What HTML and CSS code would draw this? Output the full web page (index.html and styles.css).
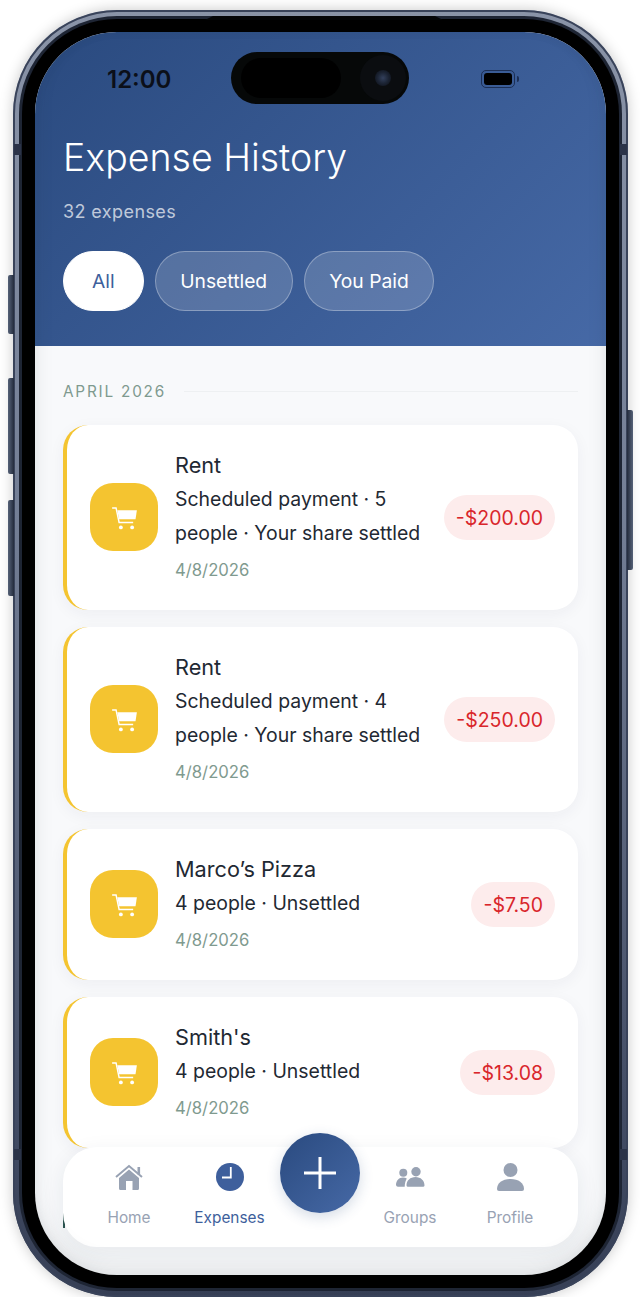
FILE: index.html
```html
<!DOCTYPE html>
<html lang="en">
<head>
    <meta charset="UTF-8">
    <meta name="viewport" content="width=device-width, initial-scale=1.0">
    <title>Expense History</title>
    <link rel="stylesheet" href="styles.css">
</head>
<body>
<div class="phone">
    <span class="side-btn btn-action"></span>
    <span class="side-btn btn-up"></span>
    <span class="side-btn btn-down"></span>
    <span class="side-btn btn-power"></span>
    <span class="band band-tl"></span>
    <span class="band band-tr"></span>
    <span class="band band-bl"></span>
    <span class="band band-br"></span>
    <div class="bezel">
        <div class="screen">
            <div class="island">
                <span class="camera"><span class="lens"></span></span>
            </div>

            <header class="header">
                <div class="status">
                    <span class="time">12:00</span>
                    <span class="battery"><span class="battery-cell"></span></span>
                </div>
                <h1>Expense History</h1>
                <p class="count">32 expenses</p>
                <div class="chips">
                    <button class="chip chip-on">All</button>
                    <button class="chip">Unsettled</button>
                    <button class="chip">You Paid</button>
                </div>
            </header>

            <main class="list">
                <div class="month">
                    <span>APRIL 2026</span>
                    <span class="month-line"></span>
                </div>

                <div class="card">
                    <div class="cat">
                        <svg class="cart" viewBox="0 0 24 24"><path d="M1 3.500h3.500l2.700 12.900h12.500" fill="none" stroke="#fff" stroke-width="1.300"/><path d="M5.600 5.500H23l-1.200 8H7.300z" fill="#fff"/><circle cx="8.800" cy="20.800" r="1.700" fill="#fff"/><circle cx="18.800" cy="20.800" r="1.700" fill="#fff"/></svg>
                    </div>
                    <div class="info">
                        <div class="name">Rent</div>
                        <div class="meta">Scheduled payment · 5 people · Your share settled</div>
                        <div class="date">4/8/2026</div>
                    </div>
                    <div class="amount">-$200.00</div>
                </div>

                <div class="card">
                    <div class="cat">
                        <svg class="cart" viewBox="0 0 24 24"><path d="M1 3.500h3.500l2.700 12.900h12.500" fill="none" stroke="#fff" stroke-width="1.300"/><path d="M5.600 5.500H23l-1.200 8H7.300z" fill="#fff"/><circle cx="8.800" cy="20.800" r="1.700" fill="#fff"/><circle cx="18.800" cy="20.800" r="1.700" fill="#fff"/></svg>
                    </div>
                    <div class="info">
                        <div class="name">Rent</div>
                        <div class="meta">Scheduled payment · 4 people · Your share settled</div>
                        <div class="date">4/8/2026</div>
                    </div>
                    <div class="amount">-$250.00</div>
                </div>

                <div class="card">
                    <div class="cat">
                        <svg class="cart" viewBox="0 0 24 24"><path d="M1 3.500h3.500l2.700 12.900h12.500" fill="none" stroke="#fff" stroke-width="1.300"/><path d="M5.600 5.500H23l-1.200 8H7.300z" fill="#fff"/><circle cx="8.800" cy="20.800" r="1.700" fill="#fff"/><circle cx="18.800" cy="20.800" r="1.700" fill="#fff"/></svg>
                    </div>
                    <div class="info">
                        <div class="name">Marco’s Pizza</div>
                        <div class="meta">4 people · Unsettled</div>
                        <div class="date">4/8/2026</div>
                    </div>
                    <div class="amount">-$7.50</div>
                </div>

                <div class="card">
                    <div class="cat">
                        <svg class="cart" viewBox="0 0 24 24"><path d="M1 3.500h3.500l2.700 12.900h12.500" fill="none" stroke="#fff" stroke-width="1.300"/><path d="M5.600 5.500H23l-1.200 8H7.300z" fill="#fff"/><circle cx="8.800" cy="20.800" r="1.700" fill="#fff"/><circle cx="18.800" cy="20.800" r="1.700" fill="#fff"/></svg>
                    </div>
                    <div class="info">
                        <div class="name">Smith's</div>
                        <div class="meta">4 people · Unsettled</div>
                        <div class="date">4/8/2026</div>
                    </div>
                    <div class="amount">-$13.08</div>
                </div>

                <div class="card card-next"></div>
            </main>

            <nav class="nav">
                <a class="tab">
                    <svg class="tab-icon" viewBox="0 0 28 28"><path d="M1 14 14 3l13 11" fill="none" stroke="#98a2b3" stroke-width="2"/><path d="M22.500 4h2.600v7.500h-2.600z" fill="#98a2b3"/><path fill-rule="evenodd" d="M4 15 14 6.500 24 15v10.500a1.500 1.500 0 0 1-1.500 1.500h-17A1.500 1.500 0 0 1 4 25.500zM11 18v9h6.500v-9z" fill="#98a2b3"/></svg>
                    <span>Home</span>
                </a>
                <a class="tab tab-on">
                    <svg class="tab-icon" viewBox="0 0 28 28"><circle cx="14" cy="14" r="14" fill="#3e5f9c"/><path d="M14.800 4v10.500H6" fill="none" stroke="#fff" stroke-width="1.800"/></svg>
                    <span>Expenses</span>
                </a>
                <button class="fab">
                    <svg viewBox="0 0 32 32"><path d="M16 0v32M0 16h32" fill="none" stroke="#fff" stroke-width="3"/></svg>
                </button>
                <a class="tab">
                    <svg class="tab-icon icon-wide" viewBox="0 0 30 28"><circle cx="8.300" cy="9.700" r="4" fill="#98a2b3"/><circle cx="21" cy="8.700" r="4.700" fill="#98a2b3"/><path d="M1 22c0-4 2.800-7.500 7-7.500 1.500 0 2.700.4 3.800 1.100-1.200 2-2 4.800-2.100 8.100H3a2 2 0 0 1-2-1.700z" fill="#98a2b3"/><path d="M11.500 22.500c0-5 3.800-8.500 9-8.500s9 3.500 9 8.500a1.400 1.400 0 0 1-1.400 1.200H12.900a1.400 1.400 0 0 1-1.400-1.200z" fill="#98a2b3"/></svg>
                    <span>Groups</span>
                </a>
                <a class="tab">
                    <svg class="tab-icon" viewBox="0 0 28 28"><circle cx="14.500" cy="7" r="7" fill="#98a2b3"/><path d="M1 26c0-6 5.500-10 13.500-10S28 20 28 26a2 2 0 0 1-2 2H3a2 2 0 0 1-2-2z" fill="#98a2b3"/></svg>
                    <span>Profile</span>
                </a>
            </nav>

            <div class="edge-shade"></div>
        </div>
    </div>
</div>
</body>
</html>
```
FILE: styles.css
```css
* {
    box-sizing: border-box;
}

body {
    margin: 0;
    background: #fff;
    font-family: Inter, "Liberation Sans", sans-serif;
    overflow: hidden;
}

/* device frame */
.phone {
    position: relative;
    width: 615px;
    height: 1287px;
    margin: 10px 0 0 13px;
    padding: 9px;
    border-radius: 104px;
    background: linear-gradient(180deg, #8a94a8 0%, #737e95 40%, #434d65 85%, #363f55 100%);
    box-shadow: 0 0 14px rgba(0, 0, 0, 0.22), inset 0 0 0 2px #39435a;
}

.phone::after {
    content: "";
    position: absolute;
    left: 192px;
    top: 6px;
    width: 238px;
    height: 4px;
    background: #050608;
    clip-path: polygon(8px 0, 230px 0, 100% 100%, 0 100%);
}

.bezel {
    height: 100%;
    padding: 13px;
    border-radius: 95px;
    background: #000;
    box-shadow: 0 0 0 3px #1e2534;
}

.screen {
    position: relative;
    display: flex;
    flex-direction: column;
    height: 1243px;
    border-radius: 82px;
    background: #f8f9fb;
    overflow: hidden;
}

.side-btn {
    position: absolute;
    width: 6px;
    background: linear-gradient(90deg, #566278, #232b3c);
    border-radius: 2px 0 0 2px;
}

.btn-action { left: -5px; top: 265px; height: 59px; }
.btn-up { left: -5px; top: 368px; height: 96px; }
.btn-down { left: -5px; top: 490px; height: 96px; }

.btn-power {
    right: -5px;
    top: 400px;
    height: 160px;
    background: linear-gradient(270deg, #566278, #232b3c);
    border-radius: 0 2px 2px 0;
}

.band {
    position: absolute;
    width: 7px;
    height: 11px;
    background: #2b3348;
}

.band-tl { left: 1px; top: 134px; }
.band-tr { right: 1px; top: 134px; }
.band-bl { left: 1px; top: 1139px; }
.band-br { right: 1px; top: 1139px; }

.island {
    position: absolute;
    left: 196px;
    top: 20px;
    width: 178px;
    height: 52px;
    border-radius: 26px;
    background: #060808;
}

.island::before {
    content: "";
    position: absolute;
    left: 10px;
    top: 6px;
    width: 100px;
    height: 40px;
    border-radius: 20px;
    background: #000;
}

.camera {
    position: absolute;
    right: 3px;
    top: 3px;
    width: 46px;
    height: 46px;
    border-radius: 50%;
    background: #0b0d10;
}

.lens {
    position: absolute;
    left: 15px;
    top: 15px;
    width: 16px;
    height: 16px;
    border-radius: 50%;
    background: radial-gradient(circle, #33405c 0%, #1b2333 50%, #0a0c12 100%);
}

/* header */
.header {
    padding: 28px 28px 35px;
    background: linear-gradient(135deg, #2a4a7f 0%, #4669a6 100%);
    color: #fff;
}

.status {
    display: flex;
    justify-content: space-between;
    align-items: center;
    height: 38px;
    padding: 0 63px 0 44px;
}

.time {
    font-size: 24px;
    font-weight: 600;
    color: #0b0f19;
}

.battery {
    position: relative;
    width: 34px;
    height: 18px;
    padding: 2px;
    border: 1px solid #1c2f55;
    border-radius: 5px;
}

.battery::after {
    content: "";
    position: absolute;
    right: -5px;
    top: 5px;
    width: 2px;
    height: 6px;
    border-radius: 0 2px 2px 0;
    background: #1c2f55;
}

.battery-cell {
    display: block;
    height: 100%;
    border-radius: 3px;
    background: #000;
}

h1 {
    margin: 36px 0 0;
    font-size: 37.500px;
    font-weight: 300;
    line-height: 48px;
}

.count {
    margin: 18px 0 0;
    font-size: 18px;
    line-height: 24px;
    letter-spacing: 0.4px;
    color: rgba(255, 255, 255, 0.7);
}

.chips {
    display: flex;
    gap: 11px;
    margin-top: 27px;
}

.chip {
    height: 60px;
    padding: 0 24.500px;
    border: 1px solid rgba(255, 255, 255, 0.3);
    border-radius: 30px;
    background: rgba(255, 255, 255, 0.16);
    color: #fff;
    font-family: inherit;
    font-size: 19.300px;
}

.chip-on {
    padding: 0 28px;
    border-color: #fff;
    background: #fff;
    color: #3e5f9c;
}

/* expense list */
.list {
    height: 882px;
    padding: 0 28px;
    overflow: hidden;
}

.month {
    display: flex;
    align-items: center;
    gap: 18px;
    height: 24px;
    margin: 33px 0 22px;
    font-size: 15.300px;
    letter-spacing: 1.800px;
    color: #7f9a8f;
}

.month-line {
    flex: 1;
    height: 1px;
    background: #eef0f2;
}

.card {
    display: flex;
    align-items: center;
    gap: 17px;
    margin-bottom: 17px;
    padding: 28px 23px 29px;
    border-left: 4px solid #f4c430;
    border-radius: 25px;
    background: #fff;
    box-shadow: 0 4px 16px rgba(30, 45, 70, 0.05);
}

.card-next {
    height: 120px;
    border-left: 2px solid #2d5550;
    background: transparent;
    box-shadow: none;
}

.cat {
    display: flex;
    align-items: center;
    justify-content: center;
    flex-shrink: 0;
    width: 68px;
    height: 68px;
    border-radius: 23px;
    background: #f4c430;
}

.cart {
    width: 27px;
    height: 27px;
}

.info {
    flex: 1;
    min-width: 0;
    color: #1f2933;
}

.name {
    font-size: 21.700px;
    line-height: 25px;
}

.meta {
    margin-top: 4px;
    font-size: 19.450px;
    line-height: 34px;
}

.date {
    margin-top: 9px;
    font-size: 16.700px;
    line-height: 22px;
    color: #7f9a8f;
}

.amount {
    flex-shrink: 0;
    padding: 1px 12px 0;
    margin-left: 3px;
    border-radius: 23px;
    background: #fdecec;
    color: #d9262b;
    font-size: 19.500px;
    line-height: 44px;
}

/* bottom bar */
.nav {
    position: absolute;
    left: 28px;
    right: 28px;
    bottom: 28px;
    display: grid;
    grid-template-columns: 100px 101px 80px 100px 100px;
    height: 100px;
    padding: 0 16px;
    border-radius: 34px;
    background: #fff;
    box-shadow: 0 6px 22px rgba(30, 45, 70, 0.08);
}

.tab {
    display: flex;
    flex-direction: column;
    align-items: center;
    padding-top: 16px;
    font-size: 15.400px;
    color: #98a2b3;
}

.tab span {
    margin-top: 17px;
    line-height: 20px;
}

.tab-on {
    color: #3e5f9c;
}

.tab-icon {
    width: 28px;
    height: 28px;
}

.icon-wide {
    width: 30px;
}

.fab {
    display: flex;
    align-items: center;
    justify-content: center;
    width: 80px;
    height: 80px;
    margin-top: -14px;
    padding: 0;
    border: 0;
    border-radius: 50%;
    background: linear-gradient(135deg, #2a4a7f, #4669a6);
    box-shadow: 0 4px 14px rgba(42, 74, 127, 0.2);
}

.fab svg {
    width: 32px;
    height: 32px;
}

.edge-shade {
    position: absolute;
    inset: 0;
    border-radius: 82px;
    box-shadow: inset 0 0 10px rgba(40, 50, 60, 0.06), inset 0 -10px 20px rgba(40, 50, 60, 0.09);
    pointer-events: none;
}
```
